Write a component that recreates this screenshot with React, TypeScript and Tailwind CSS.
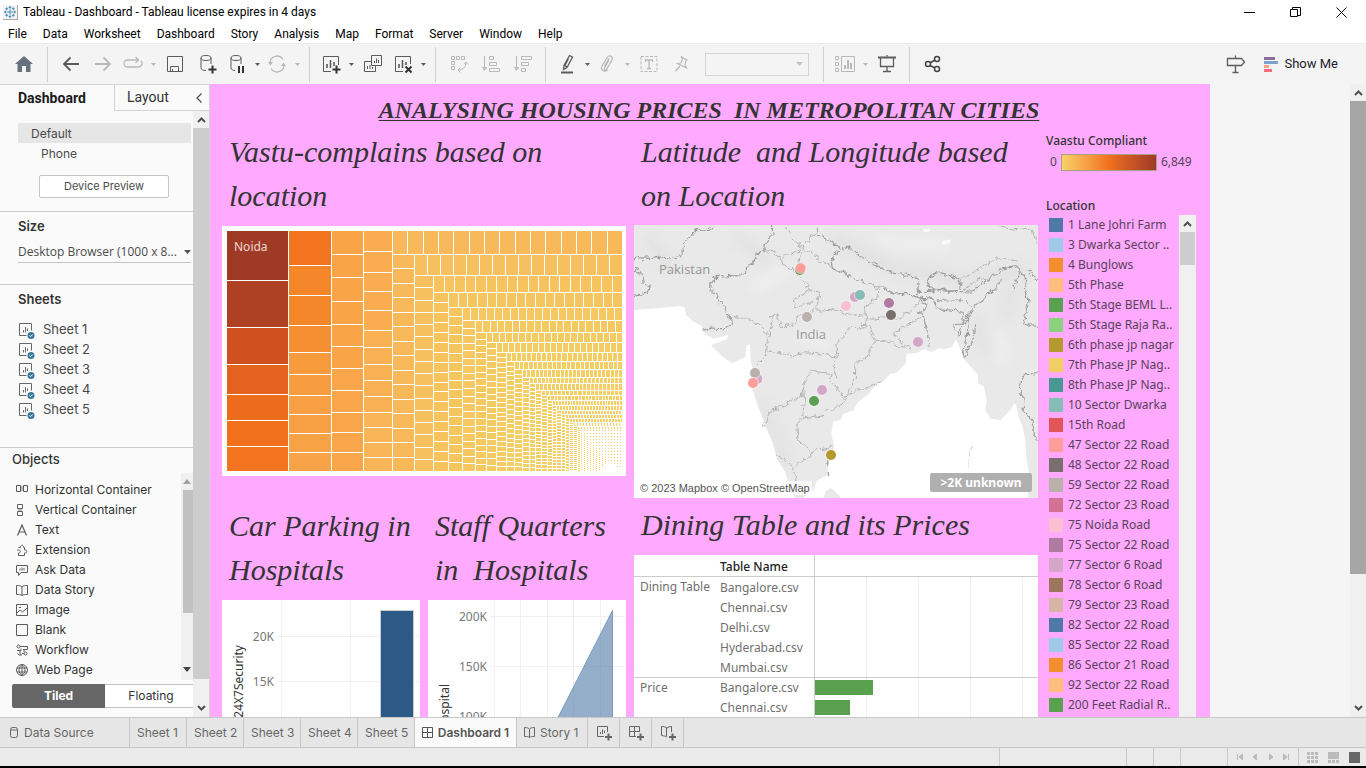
import type { ReactNode } from "react";

/* ---------- shared bits ---------- */

function Svg({ w = 20, h = 20, className = "", children }: { w?: number; h?: number; className?: string; children: ReactNode }) {
  return (
    <svg width={w} height={h} viewBox={`0 0 ${w} ${h}`} className={`shrink-0 ${className}`} fill="none" stroke="currentColor" aria-hidden="true">
      {children}
    </svg>
  );
}

function Caret() {
  return (
    <Svg w={5} h={3}>
      <path d="M0 0h5L2.500 3z" fill="currentColor" stroke="none" />
    </Svg>
  );
}

function Tool({ label, off, caret, children }: { label: string; off?: boolean; caret?: boolean; children: ReactNode }) {
  return (
    <span className={`flex h-full shrink-0 ${off ? "text-[#b8b8b8]" : "text-[#5c5c5c]"}`}>
      <button aria-label={label} disabled={off} className={`flex items-center justify-center ${caret ? "w-7" : "w-8"}`}>
        {children}
      </button>
      {caret && (
        <button aria-label={`${label} options`} disabled={off} className="flex w-3 items-center justify-center">
          <Caret />
        </button>
      )}
    </span>
  );
}

const Sep = () => <span className="mr-[7px] ml-1.5 h-[35px] w-px shrink-0 bg-[#d0d0d0]" />;

function Chevron({ dir }: { dir: "up" | "down" }) {
  return (
    <Svg w={9} h={6} className={`text-[#505050] ${dir === "down" ? "rotate-180" : ""}`}>
      <path d="M1 5l3.500-3.500L8 5" strokeWidth="2" />
    </Svg>
  );
}

const plus = <path d="M15.500 11.500v8M11.500 15.500h8" strokeWidth="2" stroke="#333" />;

/* ---------- top area ---------- */

function TitleBar() {
  return (
    <header className="flex h-6 shrink-0 items-center bg-white pr-0.5 pl-[3px]">
      <Svg w={15} h={15} className="border-r border-b border-[#aaa] bg-[#f4f4f4] text-[#3c85b0]">
        <path d="M7.500 4.500v6M4.500 7.500h6M7.500 1v3M6 2.500h3M7.500 11v3M6 12.500h3M1 7.500h3M2.500 6v3M11 7.500h3M12.500 6v3M4 2.500v3M2.500 4h3M11 2.500v3M9.500 4h3M4 9.500v3M2.500 11h3M11 9.500v3M9.500 11h3" />
      </Svg>
      <h1 className="ml-[5px] flex-1 font-['Roboto',sans-serif] text-[12px] text-black">Tableau - Dashboard - Tableau license expires in 4 days</h1>
      <div className="flex text-black">
        <button aria-label="Minimize" className="flex w-[46px] items-center justify-center"><Svg w={11} h={11}><path d="M0 5.500h11" /></Svg></button>
        <button aria-label="Restore" className="flex w-[46px] items-center justify-center"><Svg w={11} h={11}><path d="M.5 2.500h7v7h-7zM2.500 2.500v-2h8v8h-3" /></Svg></button>
        <button aria-label="Close" className="flex w-[46px] items-center justify-center"><Svg w={11} h={11}><path d="M.5.5l10 10M10.500.5l-10 10" /></Svg></button>
      </div>
    </header>
  );
}

const menus = ["File", "Data", "Worksheet", "Dashboard", "Story", "Analysis", "Map", "Format", "Server", "Window", "Help"];

function MenuBar() {
  return (
    <nav className="flex h-[19px] shrink-0 items-center gap-4 bg-white pl-2 font-['Roboto',sans-serif] text-[12px] text-black">
      {menus.map((m) => (
        <button key={m}>{m}</button>
      ))}
    </nav>
  );
}

function Toolbar() {
  return (
    <div className="flex h-[41px] shrink-0 items-center border-t border-[#ececec] bg-[#f4f4f4]">
      <button aria-label="Home" className="flex w-[41px] items-center justify-end pr-2">
        <Svg w={18} h={16}><path d="M9 0l9 8h-2.500v8h-4.500v-6H7v6H2.500V8H0z" fill="#66717f" stroke="none" /></Svg>
      </button>
      <Sep />
      <Tool label="Undo"><Svg><path d="M18 10H3M9.500 3.500L3 10l6.500 6.500" strokeWidth="1.800" /></Svg></Tool>
      <Tool label="Redo" off><Svg><path d="M2 10h15M10.500 3.500L17 10l-6.500 6.500" strokeWidth="1.800" /></Svg></Tool>
      <Tool label="Replay" off caret><Svg><path d="M6 6H4.500a3.500 3.500 0 000 7h11a3.500 3.500 0 002.500-6M6 6h9M12.500 3l3 3-3 3" strokeWidth="1.300" /></Svg></Tool>
      <Tool label="Save"><Svg><path d="M2.500 2.500h15v15h-15zM5.500 17.500v-5h8v5M7.500 15v2.500" /></Svg></Tool>
      <Tool label="New data source"><Svg><ellipse cx="9" cy="4" rx="5" ry="2.500" /><path d="M4 4v10c0 1.500 2 2.500 5 2.500M14 4v6" />{plus}</Svg></Tool>
      <Tool label="Pause auto updates" caret><Svg><ellipse cx="9" cy="4" rx="5" ry="2.500" /><path d="M4 4v10c0 1.500 2 2.500 4 2.500M14 4v6" /><path d="M12 12v7M16 12v7" strokeWidth="2" stroke="#333" /></Svg></Tool>
      <Tool label="Run update" off caret><Svg><path d="M3 9a7 7 0 0113-3.500M17 11A7 7 0 014 14.500" strokeWidth="1.300" /><path d="M1 8h5l-2.500 3.500zM14 12h5l-2.500-3.500z" fill="currentColor" stroke="none" /></Svg></Tool>
      <Sep />
      <Tool label="New worksheet" caret><Svg><path d="M10 17.500H2.500v-15h15V11" /><path d="M6 14v-4M9.500 14V6M13 12V8" strokeWidth="1.600" />{plus}</Svg></Tool>
      <Tool label="Duplicate"><Svg><path d="M8.500 1.500h10v10h-10zM8.500 7.500h-7v10h11v-6M11.500 9V7M13.500 9V4.500M15.500 9V6M4.500 15v-3M7 15v-4M9.500 15v-2" /></Svg></Tool>
      <Tool label="Clear sheet" caret><Svg><path d="M10 17.500H2.500v-15h15V10" /><path d="M6 14v-4M9.500 14V6M13 11V8" strokeWidth="1.600" /><path d="M12.500 12.500l6 6M18.500 12.500l-6 6" stroke="#333" strokeWidth="2" /></Svg></Tool>
      <Sep />
      <Tool label="Swap rows and columns" off><Svg><path d="M2.500 2.500h3v3h-3zM7.500 2.500h3v3h-3zM12.500 2.500h3v3h-3zM2.500 7.500h3v3h-3zM2.500 12.500h3v3h-3zM17 8c0 5-3 8-8 8M15 10.500L17 8l2 2.500M11.500 13.500L9 16l2.500 2.500" /></Svg></Tool>
      <Tool label="Sort ascending" off><Svg><path d="M3.500 2v14M1.500 13.500l2 3 2-3zM8.500 2.500h4v3h-4zM8.500 8.500h7v3h-7zM8.500 14.500h10v3h-10z" /></Svg></Tool>
      <Tool label="Sort descending" off><Svg><path d="M3.500 2v14M1.500 13.500l2 3 2-3zM8.500 2.500h10v3h-10zM8.500 8.500h7v3h-7zM8.500 14.500h4v3h-4z" /></Svg></Tool>
      <Sep />
      <Tool label="Highlight" caret><Svg><path d="M12.500 1.500l3 1.500-5.500 10.500-3.500 2 .5-4zM7 11l3 2M11.500 4.500l-3.500 7" strokeWidth="1.300" /><path d="M4 18.500h12" strokeWidth="2" /></Svg></Tool>
      <Tool label="Group members" off caret><Svg><path d="M12 6l-4.500 8c-.8 2 1.500 2.500 2.300 1L15 6c1.500-4-3-5.500-4.800-2.500L5 12c-2 4 2.500 7 5.500 3.500M7.500 12l4.500-7.500" strokeWidth="1.200" /></Svg></Tool>
      <Tool label="Show mark labels" off><Svg><path d="M2 2.500h16v15H2z" strokeDasharray="3 1.500" /><path d="M6.500 8V6h7v2M10 6v8.500M8 14.500h4" strokeWidth="1.300" /></Svg></Tool>
      <Tool label="Fix axes" off><Svg><path d="M10 2.500l6 3.500-1.500 1-.5 4 1.500 3-9-4.500 3.500-.5 1.500-4zM9 12l-4.500 5" strokeWidth="1.200" /></Svg></Tool>
      <span className="relative ml-2 flex shrink-0 items-center">
        <select aria-label="Fit" disabled className="h-[23px] w-[104px] appearance-none border border-[#d4d4d4] bg-[#f4f4f4]" />
        <span className="absolute right-1.5 text-[#c4c4c4]"><Svg w={7} h={4}><path d="M0 0h7L3.500 4z" fill="currentColor" stroke="none" /></Svg></span>
      </span>
      <span className="w-2 shrink-0" />
      <Sep />
      <Tool label="Show or hide cards" off caret><Svg><path d="M.5 2.500h3v3h-3zM.5 8.500h3v3h-3zM.5 14.500h3v3h-3zM6.500 2.500h13v15h-13z" /><path d="M10 15v-4M13 15V6M16 15V9" strokeWidth="2" /></Svg></Tool>
      <Tool label="Presentation mode"><Svg><path d="M1 3.500h18" strokeWidth="2" /><path d="M3.500 3.500v9h13v-9M10 1v1.500M10 12.500v5M6 17.500h8" strokeWidth="1.300" /></Svg></Tool>
      <Sep />
      <Tool label="Share"><Svg><g stroke="#444" strokeWidth="1.500"><circle cx="5" cy="10" r="2.500" /><circle cx="14" cy="5" r="2.500" /><circle cx="14" cy="15" r="2.500" /><path d="M7 9l5-3M7 11.500l5 2.500" /></g></Svg></Tool>
      <span className="ml-auto" />
      <Tool label="Data guide"><Svg><path d="M1.500 4.500h14l3 3.500-3 3.500h-14zM9.500 1.500v3M9.500 11.500v7M6.500 18.500h6" strokeWidth="1.300" /></Svg></Tool>
      <button className="mr-7 ml-3 flex items-center gap-1.5 font-['Roboto',sans-serif] text-[13px] text-[#1c1c2c]">
        <Svg w={14} h={15}>
          <g stroke="none"><path d="M0 0h11v3H0z" fill="#8a6d9c" /><path d="M0 4h14v3H0z" fill="#7ba3cd" /><path d="M0 8h5v3H0z" fill="#f4a582" /><path d="M0 12h8v3H0z" fill="#f36b7f" /></g>
        </Svg>
        Show Me
      </button>
    </div>
  );
}

/* ---------- side panel ---------- */

const objects: [string, ReactNode][] = [
  ["Horizontal Container", <><path d="M.5 1.500h4v6h-4zM7.500 1.500h4v6h-4z" /><path d="M5 4.500h2" stroke="#bbb" strokeWidth="5" /></>],
  ["Vertical Container", <><path d="M1.500.5h5v4h-5zM1.500 7.500h5v4h-5z" /><path d="M2 6h4" stroke="#bbb" strokeWidth="2" /></>],
  ["Text", <path d="M1.500 11.500L6 1l4.500 10.500M3 8h6" strokeWidth="1.200" />],
  ["Extension", <path d="M2.500 3.500h2c-.5-3 3.500-3 3 0h1v2.500c3-.5 3 3.500 0 3v2.500H2.500V9C5 9 5 6 2.500 6H1" />],
  ["Ask Data", <path d="M.5 1.500h11v7H5l-2.500 3v-3h-2zM4 6.500v-2M6 6.500v-3M8 6.500V4" />],
  ["Data Story", <path d="M.5 1.500c3 0 4 0 5.500 1.500 1.500-1.500 2.500-1.500 5.500-1.500v9c-3 0-4 0-5.500 1-1.500-1-2.500-1-5.500-1zM6 3v8" />],
  ["Image", <path d="M.5.5h11v11H.5zM1 9l3-3 2.500 2L11 4M3 3.500h2" />],
  ["Blank", <path d="M.5.5h11v11H.5z" />],
  ["Workflow", <path d="M2.500 1a1.500 1.500 0 100 3 1.500 1.500 0 000-3M4 2.500h7.500v3H7M1 6.500h4v-2M8 5.500v2.500M4 7v4h2M9.500 8a1.500 1.500 0 100 3 1.500 1.500 0 000-3M6 9.500h2M1.500 9.500l2 2" />],
  ["Web Page", <path d="M6 .5a5.500 5.500 0 100 11 5.500 5.500 0 000-11M6 .5c-4 3-4 8 0 11M6 .5c4 3 4 8 0 11M6 .5v11M1 4h10M1 8h10" />],
];

function SheetIcon() {
  return (
    <Svg w={17} h={17} className="text-[#666]">
      <path d="M8.500 13.500h-7V1.500h12v7M5.500 10.500V8M7.500 10.500V5M9.500 9V6.500" />
      <circle cx="13" cy="13.500" r="3.500" fill="#36799a" stroke="none" />
      <path d="M11.300 13.500l1.200 1.200 2.200-2.200" stroke="#fff" />
    </Svg>
  );
}

function SidePanel() {
  return (
    <aside className="flex w-[210px] shrink-0 flex-col border-t border-r border-[#d4d4d4] bg-[#fafafa] font-['Inter',sans-serif] text-[12px] text-[#4a4a4a]">
      <div className="flex h-[26px] shrink-0">
        <button className="w-[114px] pl-[18px] text-left font-['Roboto',sans-serif] text-[14px] font-bold text-[#1a1a1a]">Dashboard</button>
        <div className="flex flex-1 items-center border-b border-l border-[#d4d4d4] pl-3">
          <button className="flex-1 text-left font-['Roboto',sans-serif] text-[14px] text-[#333]">Layout</button>
          <button aria-label="Collapse pane" className="px-[7px]"><Svg w={6} h={10}><path d="M5.500.5L1 5l4.500 4.500" strokeWidth="1.200" /></Svg></button>
        </div>
      </div>
      <div className="flex min-h-0 flex-1">
        <div className="min-w-0 flex-1 overflow-hidden">
          <section className="h-[101px] border-b border-[#ccc] pt-3 pr-0.5 pl-[18px]">
            <button className="block h-5 w-full bg-[#e6e6e6] pt-px pl-[13px] text-left">Default</button>
            <button className="block h-5 pt-px pl-[23px]">Phone</button>
            <button className="mt-3 ml-[21px] block h-[23px] w-[130px] rounded-[2px] border border-[#c4c4c4] bg-white text-[11px]">Device Preview</button>
          </section>
          <section className="h-[73px] border-b border-[#ccc] pt-[5px] pr-0.5 pl-[18px]">
            <label htmlFor="size" className="block h-5 text-[13px] font-semibold text-[#333]">Size</label>
            <div className="relative flex h-[26px] items-center border-b border-[#c4c4c4] pt-1">
              <select id="size" className="w-full appearance-none bg-transparent font-['Open_Sans',sans-serif] text-[12px] outline-none">
                <option>Desktop Browser (1000 x 8...</option>
              </select>
              <span className="absolute right-0"><Svg w={7} h={4}><path d="M0 0h7L3.500 4z" fill="#555" stroke="none" /></Svg></span>
            </div>
          </section>
          <section className="h-[163px] border-b border-[#ccc] pt-[5px] pl-[18px]">
            <h2 className="mb-2.5 h-5 text-[13px] font-semibold text-[#333]">Sheets</h2>
            {[1, 2, 3, 4, 5].map((n) => (
              <button key={n} className="flex h-5 w-full items-center gap-2 text-[13px]"><SheetIcon />Sheet {n}</button>
            ))}
          </section>
          <section className="pl-3">
            <h2 className="h-[25px] pt-0.5 text-[13px] font-medium text-[#333]">Objects</h2>
            <div className="flex">
              <ul className="flex-1 pt-[7px] pl-1">
                {objects.map(([name, d]) => (
                  <li key={name} className="flex h-5 items-center gap-[7px] whitespace-nowrap text-[#333]">
                    <Svg w={12} h={12} className="text-[#5c5c5c]">{d}</Svg>{name}
                  </li>
                ))}
              </ul>
              <div className="flex w-3 flex-col items-end bg-[#f0f0f0] pt-1.5">
                <Svg w={8} h={5} className="mr-0.5"><path d="M0 5h8L4 0z" fill="#a0a0a0" stroke="none" /></Svg>
                <span className="mt-1.5 h-[123px] w-2.5 bg-[#c1c1c1]" />
                <Svg w={8} h={5} className="mt-auto mr-0.5 mb-2"><path d="M0 0h8L4 5z" fill="#444" stroke="none" /></Svg>
              </div>
            </div>
            <div className="mt-1 flex h-6">
              <button className="w-[93px] rounded-l-[2px] bg-[#666] font-bold text-white">Tiled</button>
              <button className="flex-1 border-y border-[#c4c4c4] bg-white pl-1 text-[#333]">Floating</button>
            </div>
          </section>
        </div>
        <div className="flex w-4 flex-col items-center bg-[#f0f0f0]">
          <span className="flex h-[17px] items-center"><Chevron dir="up" /></span>
          <span className="w-full flex-1 bg-[#cdcdcd]" />
          <span className="flex h-[38px] items-end pb-1.5"><Chevron dir="down" /></span>
        </div>
      </div>
    </aside>
  );
}

/* ---------- treemap ---------- */

type Cell = { x: number; y: number; w: number; h: number; c: string };

function mix(a: number[], b: number[], t: number) {
  return `rgb(${a.map((v, i) => Math.round(v + (b[i] - v) * t)).join(",")})`;
}

const leadColumns: { x: number; w: number; ys: number[]; colors: string[] }[] = [
  { x: 0, w: 61, ys: [0, 50, 97, 134, 164, 190, 216, 241], colors: ["#9e3a26", "#ae4024", "#d05020", "#e4621d", "#ed6c1b", "#f0701c", "#f2741e"] },
  { x: 62, w: 42, ys: [0, 35, 65, 95, 122, 144, 165, 184, 203, 222, 241], colors: ["#f2741e", "#f58629", "#f5872b", "#f68f32", "#f79b3d", "#f79c3f", "#f8a043", "#f8a144", "#f8a246", "#f8a347"] },
  { x: 105, w: 31, ys: [0, 24, 47, 71, 94, 116, 138, 160, 182, 202, 222, 241], colors: ["#f9a447", "#f9a64a"] },
  { x: 137, w: 28, ys: [0, 21, 42, 61, 80, 100, 117, 134, 150, 166, 182, 197, 212, 227, 241], colors: ["#faad50", "#f9b154", "#f9b557"] },
];

/* Left edge of each nested column and top edge of each nested row, with the cell counts of both. */
const nestX = [166, 188, 207, 222, 236, 249, 260, 270, 280, 288, 296, 303, 309, 315, 321, 326, 330, 335];
const nestY = [0, 24, 45, 62, 77, 90, 102, 112, 122, 131, 139, 147, 153, 160, 165, 170, 175, 180];
const rowCounts = [15, 16, 18, 18, 20, 20, 21, 21, 23, 23, 24, 24, 22, 20, 22, 24, 22];
const columnCounts = [15, 16, 18, 18, 20, 21, 20, 24, 23, 22, 23, 22, 24, 23, 22, 22, 20];

function buildCells(): Cell[] {
  const W = 395;
  const H = 240;
  const out: Cell[] = [];
  for (const col of leadColumns) {
    for (let i = 0; i < col.ys.length - 1; i++) {
      const ci = Math.min(col.colors.length - 1, Math.floor((i * col.colors.length) / (col.ys.length - 1)));
      out.push({ x: col.x, y: col.ys[i], w: col.w, h: col.ys[i + 1] - col.ys[i] - 1, c: col.colors[ci] });
    }
  }
  const from = [248, 185, 90];
  const to = [243, 207, 101];
  for (let k = 0; k < nestX.length - 1; k++) {
    const [x0, x1, y0, y1] = [nestX[k], nestX[k + 1], nestY[k], nestY[k + 1]];
    const c = mix(from, to, Math.min(1, Math.sqrt(k / 9)));
    const n = rowCounts[k];
    for (let i = 0; i < n; i++) {
      const a = Math.round(x0 + ((W + 1 - x0) * i) / n);
      const b = Math.round(x0 + ((W + 1 - x0) * (i + 1)) / n);
      out.push({ x: a, y: y0, w: b - a - 1, h: y1 - y0 - 1, c });
    }
    const m = columnCounts[k];
    for (let i = 0; i < m; i++) {
      const a = Math.round(y1 + ((H + 1 - y1) * i) / m);
      const b = Math.round(y1 + ((H + 1 - y1) * (i + 1)) / m);
      out.push({ x: x0, y: a, w: x1 - x0 - 1, h: Math.max(1, b - a - 1), c });
    }
  }
  let x = 335;
  let y = 180;
  for (let step = 0; x < W - 2 && y < H - 2; step++) {
    const s = step < 4 ? 4 : 3;
    const thick = step < 5 ? s - 1 : 1;
    for (let a = x; a < W; a += 3) out.push({ x: a, y, w: step < 3 ? 2 : 1, h: thick, c: "#f3cf65" });
    for (let b = y + s; b < H; b += step < 2 ? 3 : 2) {
      if (x + b < 612) out.push({ x, y: b, w: thick, h: step < 2 ? 2 : 1, c: "#f3cf65" });
    }
    x += s;
    y += s;
  }
  return out;
}

const cells = buildCells();

function Treemap() {
  return (
    <div className="relative bg-white py-[5px] pr-1 pl-[5px]">
      <svg viewBox="0 0 395 240" className="block w-full" shapeRendering="crispEdges" role="img" aria-label="Vaastu compliance by location">
        {cells.map((r, i) => (
          <rect key={i} x={r.x} y={r.y} width={r.w} height={r.h} fill={r.c} />
        ))}
      </svg>
      <span className="absolute top-3 left-3 font-['Noto_Sans',sans-serif] text-[12px] text-[#f0d8d0]">Noida</span>
    </div>
  );
}

/* ---------- map ---------- */

const land =
  "M12 15H1224V834H1195L1192 790 1200 770 1190 720 1186 660 1178 620 1165 590 1160 560 1153 548 1143 568 1112 600 1082 596 1066 570 1070 540 1062 500 1045 490 1043 462 1022 440 1000 415 990 385 978 358 965 382 940 388 928 384 905 396 882 388 862 398 830 402 828 430 800 458 780 462 756 488 740 490 716 522 682 548 672 570 640 582 632 600 610 604 604 640 612 680 607 705 596 730 594 765 560 782 552 808 520 834H496L478 800 466 756 442 720 428 668 404 610 385 562 366 505 370 450 362 425 360 374 350 376 346 412 306 430 276 408 243 376 290 358 296 344 252 356 226 344 215 318 192 306 168 284 164 262 150 258 90 264 12 270Z";

const borders = [
  "M12 113l60 2 20-4 40 4 24-12 2-35 22-14 18-22 30-2 22-8",
  "M428 20l-2 28-20 22-2 22-18 4-14 28-28 32-18 12-30-2-6 8-28-8-18 24-4 24 22 6-4 18 28 24 16 34 2 20-26 10-36-2-24 8",
  "M12 148l24 10 4 34 18 6-8 22-38 10",
  "M558 20l8 24 34 18 28 20-8 12-16 32 4 20 28 12 52 24 40 16 28 0 34 24 40-2 46 16 22 0",
  "M632 88l24-8 24 20 34 22 30 14 28 18 26 4 36 10 28 4 4 50",
  "M892 186l10-18 18-10 24 6 26 6 20 14 4 24-76 4-18-8z",
  "M880 218l30-6 60 2 56 2 34-28 30-22 26-20 30-4 18-6 10 20-12 20-12 24",
  "M870 206l-6 28 20 16 2 22-20 2 16 22 8 24 4 36 4 24",
  "M892 226l22 16 6 24 40 4 42 4-4 34-28 4 6 20 12 16 2-24 18-22 18-38 34-26 34-32 18-22",
  "M1030 270l-14 28-4 50-12 52 4 16 16-38 14-38 4-26",
  "M1176 150l14 30-4 38 8 30-14 64 44 8M1196 150l8 20 20 10",
  "M1224 462l-40-2-16 44 14 26-2 36 26 36 4 42 14 14",
];

const states = [
  "M400 94l30 4 28 12 30-8 20-12 10-16M450 110l6 24 40 20 16 14 10 20 22 22 28 8-6 14-6 34 10 12M540 208l-50 34 4 22 60-20",
  "M470 22l8 22 20 24 24 12-14 30 6 40-10 18M528 70l12-20 22-8",
  "M524 90l28 14 20 20 32 12M564 270l40-2 50 14 44 6M560 256l-20 22-30 8-20 26-40 8-8-36-22 10",
  "M308 290l44 2 32 20 34 32-6 36-6 30-26 26M418 346l4-34 12-30",
  "M410 392l40 8 40 8 24-10 60 4 44 6 8-42 34-44 46 2 4-32-10-18 20-24 20-14 4-28-14-10",
  "M716 298l40-4 50 4 40-30 30-30M692 316l22 2 20 40 16 6 36 0 14 14 30 4M876 286l-50 34-32 18 18 28 34 20",
  "M734 364l-20 48-36 16-2 46-20 48-16 10-22-34-20-14 6-24-36-4-24-6-22 46-6 30-60 34-36 12-6 20-14 28",
  "M518 510l4 42-4 42 56-8 64-36 10-20 34-20 28-6 46-18M620 400l-10 40 12 40",
  "M518 594l-18 16 4 52 44 32 60-16M436 700l50 38 12 34-2 32M552 690l-10 18-46 30",
  "M990 176l30-12 44-28 38-20 58 6M1000 208l50-30 50-10M920 242l80-4 24 24M1110 20l42 10 50-6 20 40",
];

const dots: [number, number, string][] = [
  [510, 150, "#4a8f3c"], [512, 145, "#ff9d9a"], [675, 231, "#d4a6c8"], [690, 225, "#86bcb6"], [648, 258, "#fabfd2"],
  [777, 249, "#b07aa1"], [783, 285, "#79706e"], [531, 291, "#bab0ac"], [864, 366, "#d4a6c8"], [382, 477, "#d4a6c8"],
  [375, 459, "#bab0ac"], [369, 489, "#ff9d9a"], [576, 510, "#d4a6c8"], [552, 543, "#59a14f"], [603, 705, "#b6992d"],
];

function IndiaMap() {
  return (
    <div className="relative bg-white">
      <svg viewBox="0 0 404 273" className="block w-full" role="img" aria-label="Map of India">
        <defs>
          <filter id="rough" filterUnits="userSpaceOnUse" x="0" y="0" width="1240" height="850">
            <feTurbulence type="fractalNoise" baseFrequency="0.060" numOctaves="3" seed="4" />
            <feDisplacementMap in="SourceGraphic" scale="22" xChannelSelector="R" yChannelSelector="G" />
          </filter>
          <filter id="haze" filterUnits="userSpaceOnUse" x="0" y="0" width="1240" height="850" colorInterpolationFilters="sRGB">
            <feGaussianBlur stdDeviation="14" />
          </filter>
          <clipPath id="landClip"><path d={land} /></clipPath>
        </defs>
        <g transform="scale(0.3333) translate(-12 -15)" fill="none">
          <path d={land} fill="#e9e9e9" />
          <path d="M580 834l8-22 16-8 22 20 6 10z" fill="#e9e9e9" />
          <g clipPath="url(#landClip)">
            <g filter="url(#haze)" strokeLinecap="round">
              <path d="M620 60l160 80 220 40 180-30" stroke="#e2e2e2" strokeWidth="40" />
              <path d="M60 60l60 80M330 60l80 60M400 560l70 160M1040 300l20 90M1150 200l-20 90" stroke="#e2e2e2" strokeWidth="30" />
              <path d="M380 200l90-50M760 60l180 20M520 350l60 10M1110 360l10 60" stroke="#ededed" strokeWidth="40" />
            </g>
          </g>
          <path d="M876 26l26 0-4 9-14 2zM936 64l28-6-8 14-20 4z" fill="#fafafa" />
          <g filter="url(#rough)">
            <g stroke="#b2b2b2" strokeWidth="3" strokeLinejoin="round">{states.map((d) => <path key={d} d={d} />)}</g>
            <g stroke="#9c9c9c" strokeWidth="3.500" strokeLinejoin="round">{borders.map((d) => <path key={d} d={d} />)}</g>
            <path d="M1024 676l-4 34-8 30" stroke="#ddd" strokeWidth="4" />
            <path d="M592 724v8M596 756l2 10" stroke="#999" strokeWidth="6" />
          </g>
          {dots.map(([x, y, c]) => (
            <g key={`${x}-${y}`}>
              <circle cx={x} cy={y} r="18" fill="#f4f4f4" fillOpacity="0.600" />
              <circle cx={x} cy={y} r="15" fill={c} />
            </g>
          ))}
        </g>
      </svg>
      <span className="absolute top-[35px] left-[25px] font-['Open_Sans',sans-serif] text-[13px] text-[#969696]">Pakistan</span>
      <span className="absolute top-[100px] left-[162px] font-['Open_Sans',sans-serif] text-[13px] text-[#969696]">India</span>
      <span className="absolute bottom-[3px] left-1 bg-white/70 px-0.5 font-['Liberation_Sans',sans-serif] text-[11px] leading-[14px] text-[#555]">© 2023 Mapbox © OpenStreetMap</span>
      <button className="absolute right-1.5 bottom-1.5 h-[19px] w-[102px] rounded-[2px] bg-[#b0b0b0] font-['Noto_Sans',sans-serif] text-[12px] leading-[18px] font-bold text-white">&gt;2K unknown</button>
    </div>
  );
}

/* ---------- lower charts ---------- */

const axisText = "font-['Noto_Sans',sans-serif] text-[12px]";

function ParkingChart() {
  return (
    <svg viewBox="0 0 198 200" className="block w-full bg-white" role="img" aria-label="Car parking bar chart">
      <path d="M59.500 0v200M128.500 0v200M55 36.500h143M55 81.500h143" stroke="#f0f0f0" />
      <rect x="158.500" y="10.500" width="33" height="200" fill="#2c5985" stroke="#ccc" />
      <g className={axisText} fill="#777">
        <text x="52" y="41" textAnchor="end">20K</text>
        <text x="52" y="86" textAnchor="end">15K</text>
        <text transform="translate(21 45) rotate(-90)" textAnchor="end" fill="#333">24X7Security</text>
      </g>
    </svg>
  );
}

function StaffChart() {
  return (
    <svg viewBox="0 0 198 200" className="block w-full bg-white" role="img" aria-label="Staff quarters area chart">
      <path d="M66.500 0v200M92.500 0v200M119.500 0v200M145.500 0v200M172.500 0v200M62 16.500h136M62 66.500h136" stroke="#f0f0f0" />
      <path d="M88 200L184.500 10.500V200z" fill="#4e79a7" fillOpacity="0.600" stroke="#7a9cc4" />
      <g className={axisText} fill="#777">
        <text x="59" y="21" textAnchor="end">200K</text>
        <text x="59" y="71" textAnchor="end">150K</text>
        <text x="59" y="121" textAnchor="end">100K</text>
        <text transform="translate(21 84) rotate(-90)" textAnchor="end" fill="#333">Hospital</text>
      </g>
    </svg>
  );
}

const dining = [
  { group: "Dining Table", rows: [["Bangalore.csv", 0], ["Chennai.csv", 0], ["Delhi.csv", 0], ["Hyderabad.csv", 0], ["Mumbai.csv", 0]] },
  { group: "Price", rows: [["Bangalore.csv", 58], ["Chennai.csv", 35]] },
] as { group: string; rows: [string, number][] }[];

function DiningTable() {
  return (
    <table className="w-full table-fixed border-separate border-spacing-0 bg-white font-['Noto_Sans',sans-serif] text-[12px] leading-[19px] text-[#707070]">
      <colgroup><col className="w-[86px]" /><col className="w-[95px]" /><col /></colgroup>
      <thead>
        <tr className="h-[22px]">
          <th className="border-b border-[#ccc] p-0" />
          <th className="border-r border-b border-[#ccc] p-0 pt-0.5 text-left font-medium text-[#222]">Table Name</th>
          <th className="border-b border-[#ccc] p-0" />
        </tr>
      </thead>
      {dining.map((g, gi) => (
        <tbody key={g.group}>
          {g.rows.map(([name, value], i) => (
            <tr key={name} className="h-5">
              {i === 0 && (
                <th rowSpan={g.rows.length} className={`p-0 pl-1.5 text-left align-top font-normal whitespace-nowrap ${gi ? "border-t border-[#ccc]" : ""}`}>{g.group}</th>
              )}
              <td className={`h-5 border-r border-[#ccc] p-0 ${gi && i === 0 ? "border-t" : ""}`}>{name}</td>
              <td className={`h-5 border-[#ccc] bg-[repeating-linear-gradient(90deg,transparent_0_51px,#ededed_51px_52px)] p-0 ${gi && i === 0 ? "border-t" : ""}`}>
                {value > 0 && <div className="h-[15px] bg-[#59a14f]" style={{ width: value }} />}
              </td>
            </tr>
          ))}
        </tbody>
      ))}
    </table>
  );
}

/* ---------- legends ---------- */

const legend: [string, string][] = [
  ["1 Lane Johri Farm", "#4e79a7"], ["3 Dwarka Sector ..", "#a0cbe8"], ["4 Bunglows", "#f28e2b"], ["5th Phase", "#ffbe7d"],
  ["5th Stage BEML L..", "#59a14f"], ["5th Stage Raja Ra..", "#8cd17d"], ["6th phase jp nagar", "#b6992d"], ["7th Phase JP Nag..", "#f1ce63"],
  ["8th Phase JP Nag..", "#499894"], ["10 Sector Dwarka", "#86bcb6"], ["15th Road", "#e15759"], ["47 Sector 22 Road", "#ff9d9a"],
  ["48 Sector 22 Road", "#79706e"], ["59 Sector 22 Road", "#bab0ac"], ["72 Sector 23 Road", "#d37295"], ["75 Noida Road", "#fabfd2"],
  ["75 Sector 22 Road", "#b07aa1"], ["77 Sector 6 Road", "#d4a6c8"], ["78 Sector 6 Road", "#9d7660"], ["79 Sector 23 Road", "#d7b5a6"],
  ["82 Sector 22 Road", "#4e79a7"], ["85 Sector 22 Road", "#a0cbe8"], ["86 Sector 21 Road", "#f28e2b"], ["92 Sector 22 Road", "#ffbe7d"],
  ["200 Feet Radial R..", "#59a14f"],
];

function Legends() {
  return (
    <div className="flex w-[150px] shrink-0 flex-col font-['Noto_Sans',sans-serif] text-[12px] text-[#58425a]">
      <h3 className="h-[23px] pt-0.5 font-medium text-[#333]">Vaastu Compliant</h3>
      <div className="flex h-[18px] items-center pl-1 text-[12px]">
        0
        <span className="mx-1 h-[17px] w-24 border border-[#aa9f8c] bg-linear-to-r from-[#f8d168] via-[#f0701c] to-[#9e3a26]" />
        6,849
      </div>
      <h3 className="mt-[26px] h-[18px] font-medium text-[#333]">Location</h3>
      <div className="flex flex-1">
        <ul className="w-[133px]">
          {legend.map(([name, color]) => (
            <li key={name} className="flex h-5 items-center gap-[5px] pl-[3px] whitespace-nowrap">
              <span className="h-3.5 w-3.5 shrink-0" style={{ background: color }} />
              {name}
            </li>
          ))}
        </ul>
        <div className="flex w-[17px] flex-col items-center bg-[#f0f0f0]">
          <span className="flex h-[17px] items-center"><Chevron dir="up" /></span>
          <span className="h-[33px] w-[15px] bg-[#cdcdcd]" />
        </div>
      </div>
    </div>
  );
}

/* ---------- dashboard ---------- */

function Heading({ children }: { children: string }) {
  return <h2 className="pl-[7px] font-['Liberation_Serif',serif] text-[30px] leading-[44px] font-normal whitespace-pre-line text-[#333] italic">{children}</h2>;
}

function Dashboard() {
  return (
    <main className="flex min-w-0 flex-1 overflow-hidden bg-[#f5f5f5]">
      <div className="w-[1000px] shrink-0 bg-[#ffaaff] pr-3.5 pl-3">
        <h1 className="h-[46px] text-center font-['Liberation_Serif',serif] text-[24px] leading-[52px] font-bold whitespace-pre text-[#333] italic underline decoration-1 underline-offset-2">ANALYSING HOUSING PRICES  IN METROPOLITAN CITIES</h1>
        <div className="flex gap-2">
          <div className="w-[404px] shrink-0">
            <Heading>{"Vastu-complains based on\nlocation"}</Heading>
            <div className="h-2" />
            <Treemap />
            <div className="mt-7 grid grid-cols-2 gap-2">
              <div><Heading>{"Car Parking in\nHospitals"}</Heading><div className="h-2" /><ParkingChart /></div>
              <div><Heading>{"Staff Quarters\nin \u00a0Hospitals"}</Heading><div className="h-2" /><StaffChart /></div>
            </div>
          </div>
          <div className="w-[404px] shrink-0">
            <Heading>{"Latitude \u00a0and Longitude based\non Location"}</Heading>
            <div className="h-[7px]" />
            <IndiaMap />
            <div className="mt-[5px] mb-2"><Heading>Dining Table and its Prices</Heading></div>
            <DiningTable />
          </div>
          <Legends />
        </div>
      </div>
      <div className="ml-auto flex w-4 flex-col items-center bg-[#f0f0f0]">
        <span className="flex h-[17px] items-center"><Chevron dir="up" /></span>
        <span className="w-full flex-1 bg-[#a6a6a6]" />
        <span className="flex h-[143px] items-end pb-1.5"><Chevron dir="down" /></span>
      </div>
    </main>
  );
}

/* ---------- bottom bars ---------- */

const gridIcon = <path d="M.5.5h10v10H.5zM5.500.5v10M.5 5.500h10" />;
const bookIcon = <path d="M.5.5c3 0 3.500.5 5 1.500C7 1 7.500.5 10.500.5v9c-3 0-3.500 0-5 1-1.500-1-2-1-5-1zM5.500 2v8" />;

function SheetTabs() {
  const tab = "flex h-full items-center border-r border-[#c8c8c8]";
  const add = <path d="M12.500 8.500v7M9 12h7" strokeWidth="2" />;
  return (
    <nav className="flex h-[30px] shrink-0 items-center border-t border-[#c8c8c8] bg-[#e6e6e6] font-['Inter',sans-serif] text-[12px] text-[#666]">
      <button className={`${tab} w-[130px] gap-1.5 pl-2.5`}>
        <Svg w={8} h={11}><rect x=".5" y=".5" width="7" height="10" rx="2" /><path d="M1 3h6" /></Svg>Data Source
      </button>
      {[1, 2, 3, 4, 5].map((n) => (
        <button key={n} className={`${tab} w-[57px] pl-[7px] whitespace-nowrap`}>Sheet {n}</button>
      ))}
      <button className={`${tab} w-[102px] justify-center gap-[5px] bg-[#fafafa] font-semibold whitespace-nowrap text-[#555]`}><Svg w={11} h={11}>{gridIcon}</Svg>Dashboard 1</button>
      <button className={`${tab} w-[71px] pl-[7px] gap-[5px] whitespace-nowrap`}><Svg w={11} h={11}>{bookIcon}</Svg>Story 1</button>
      <button aria-label="New worksheet" className={`${tab} w-8 justify-center`}><Svg w={16} h={16}><path d="M8 11.500H1.500v-10h10V7M4.500 9V7M6.500 9V4.500M8.500 8V5.500" />{add}</Svg></button>
      <button aria-label="New dashboard" className={`${tab} w-8 justify-center`}><Svg w={16} h={16}><path d="M8 11.500H1.500v-10h10V7M6.500 1.500v10M1.500 6.500h10" />{add}</Svg></button>
      <button aria-label="New story" className={`${tab} w-8 justify-center`}><Svg w={16} h={16}><path d="M7 12c-1.500-1-2.500-1-5.500-1.500v-9c3 0 4 .5 5.500 1.500 1.500-1 2-1.500 4.500-1.500V7M6.500 3v8" />{add}</Svg></button>
    </nav>
  );
}

function StatusBar() {
  return (
    <footer className="flex h-[21px] shrink-0 items-center justify-end border-t border-b-2 border-t-[#c8c8c8] border-b-black bg-[#eaeaea] text-[#bbb]">
      <span className="h-full w-[127px] border-l border-[#c8c8c8]" />
      <span className="h-full w-[27px] border-l border-[#c8c8c8]" />
      <span className="h-full w-[27px] border-l border-[#c8c8c8]" />
      <span className="h-full w-[47px] border-l border-[#c8c8c8]" />
      <div className="flex h-full w-[71px] items-center justify-around border-l border-[#c8c8c8] px-1">
        {["M1.500 1v6M6.500 1v6L3 4z", "M5.500 1v6L2 4z", "M2.500 1v6L6 4z", "M6.500 1v6M1.500 1v6L5 4z"].map((d, i) => (
          <button key={d} aria-label={["First", "Previous", "Next", "Last"][i]}><Svg w={8} h={8}><path d={d} fill="currentColor" /></Svg></button>
        ))}
      </div>
      <div className="flex h-full w-[68px] items-center justify-between border-l border-[#c8c8c8] pr-1.5 pl-2">
        <button aria-label="Sheet sorter"><Svg w={11} h={11}><path d="M0 1.500h11M0 5.500h11M0 9.500h11" strokeWidth="3" strokeDasharray="3 1" /></Svg></button>
        <button aria-label="Filmstrip"><Svg w={11} h={11}><path d="M0 0h11v7H0zM0 8h3v3H0zM4 8h3v3H4zM8 8h3v3H8z" fill="currentColor" stroke="none" /></Svg></button>
        <button aria-label="Tabs"><Svg w={11} h={11}><path d="M0 0h11v11H0z" fill="#666" stroke="none" /></Svg></button>
      </div>
    </footer>
  );
}

export default function App() {
  return (
    <div className="flex h-screen flex-col overflow-hidden bg-white">
      <TitleBar />
      <MenuBar />
      <Toolbar />
      <div className="flex min-h-0 flex-1">
        <SidePanel />
        <Dashboard />
      </div>
      <SheetTabs />
      <StatusBar />
    </div>
  );
}
